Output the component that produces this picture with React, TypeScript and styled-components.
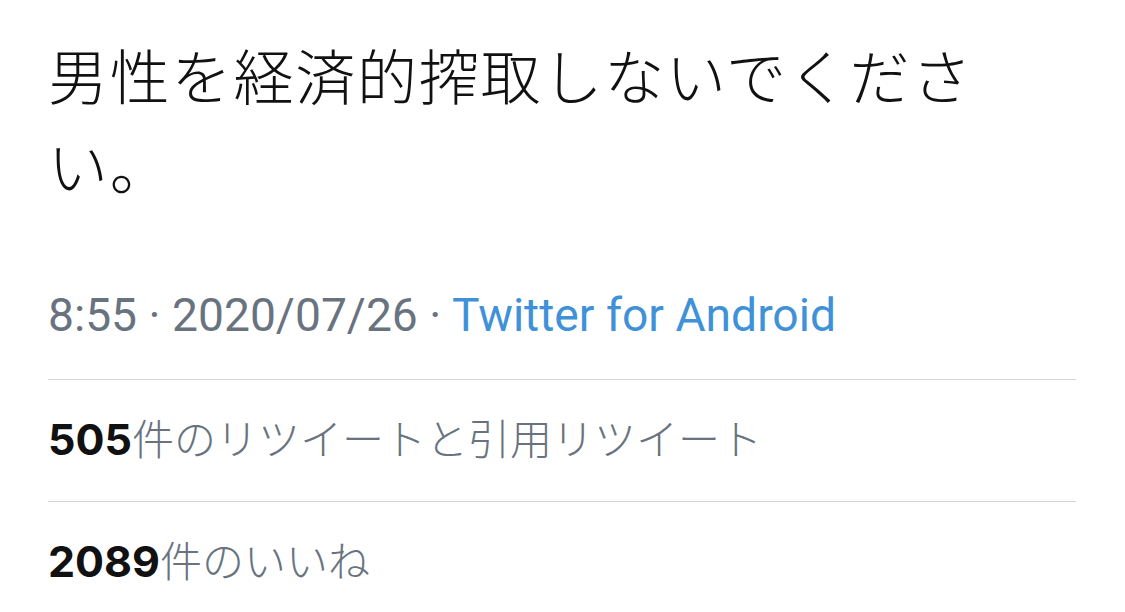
import styled, { createGlobalStyle } from 'styled-components'

const GlobalStyle = createGlobalStyle`
  html, body {
    margin: 0;
    padding: 0;
    background: #ffffff;
  }
`

const Page = styled.div`
  width: 1125px;
  height: 612px;
  overflow: hidden;
  padding: 0 49px 0 48px;
  box-sizing: border-box;
  font-family: Inter, 'Noto Sans CJK JP', sans-serif;
  color: #14171a;
`

const TweetText = styled.p`
  margin: 0;
  padding-top: 29px;
  font-family: 'Noto Sans CJK JP', sans-serif;
  font-weight: 300;
  font-size: 60px;
  line-height: 90px;
  letter-spacing: 1.8px;
  color: #111111;
  line-break: strict;
`

const Meta = styled.div`
  padding: 78px 0 36px;
  font-family: Roboto, sans-serif;
  font-size: 46.2px;
  line-height: 56px;
  color: #68737f;
  border-bottom: 1px solid #d6d6d8;
`

const SourceLink = styled.span`
  color: #3f91d8;
`

const StatRow = styled.div<{ $last?: boolean }>`
  display: flex;
  align-items: baseline;
  padding: 32px 0 37px;
  font-size: 42px;
  line-height: 50px;
  border-bottom: ${({ $last }) => ($last ? 'none' : '1px solid #d6d6d8')};
`

const Count = styled.span`
  font-size: 43px;
  font-weight: 700;
  color: #111111;
`

const Label = styled.span`
  font-family: 'Noto Sans CJK JP', sans-serif;
  font-weight: 300;
  color: #68737f;
`

export default function App() {
  return (
    <>
      <GlobalStyle />
      <Page>
        <TweetText>男性を経済的搾取しないでください。</TweetText>
        <Meta>
          8:55 · 2020/07/26 · <SourceLink>Twitter for Android</SourceLink>
        </Meta>
        <StatRow>
          <Count>505</Count>
          <Label>件のリツイートと引用リツイート</Label>
        </StatRow>
        <StatRow $last>
          <Count>2089</Count>
          <Label>件のいいね</Label>
        </StatRow>
      </Page>
    </>
  )
}
